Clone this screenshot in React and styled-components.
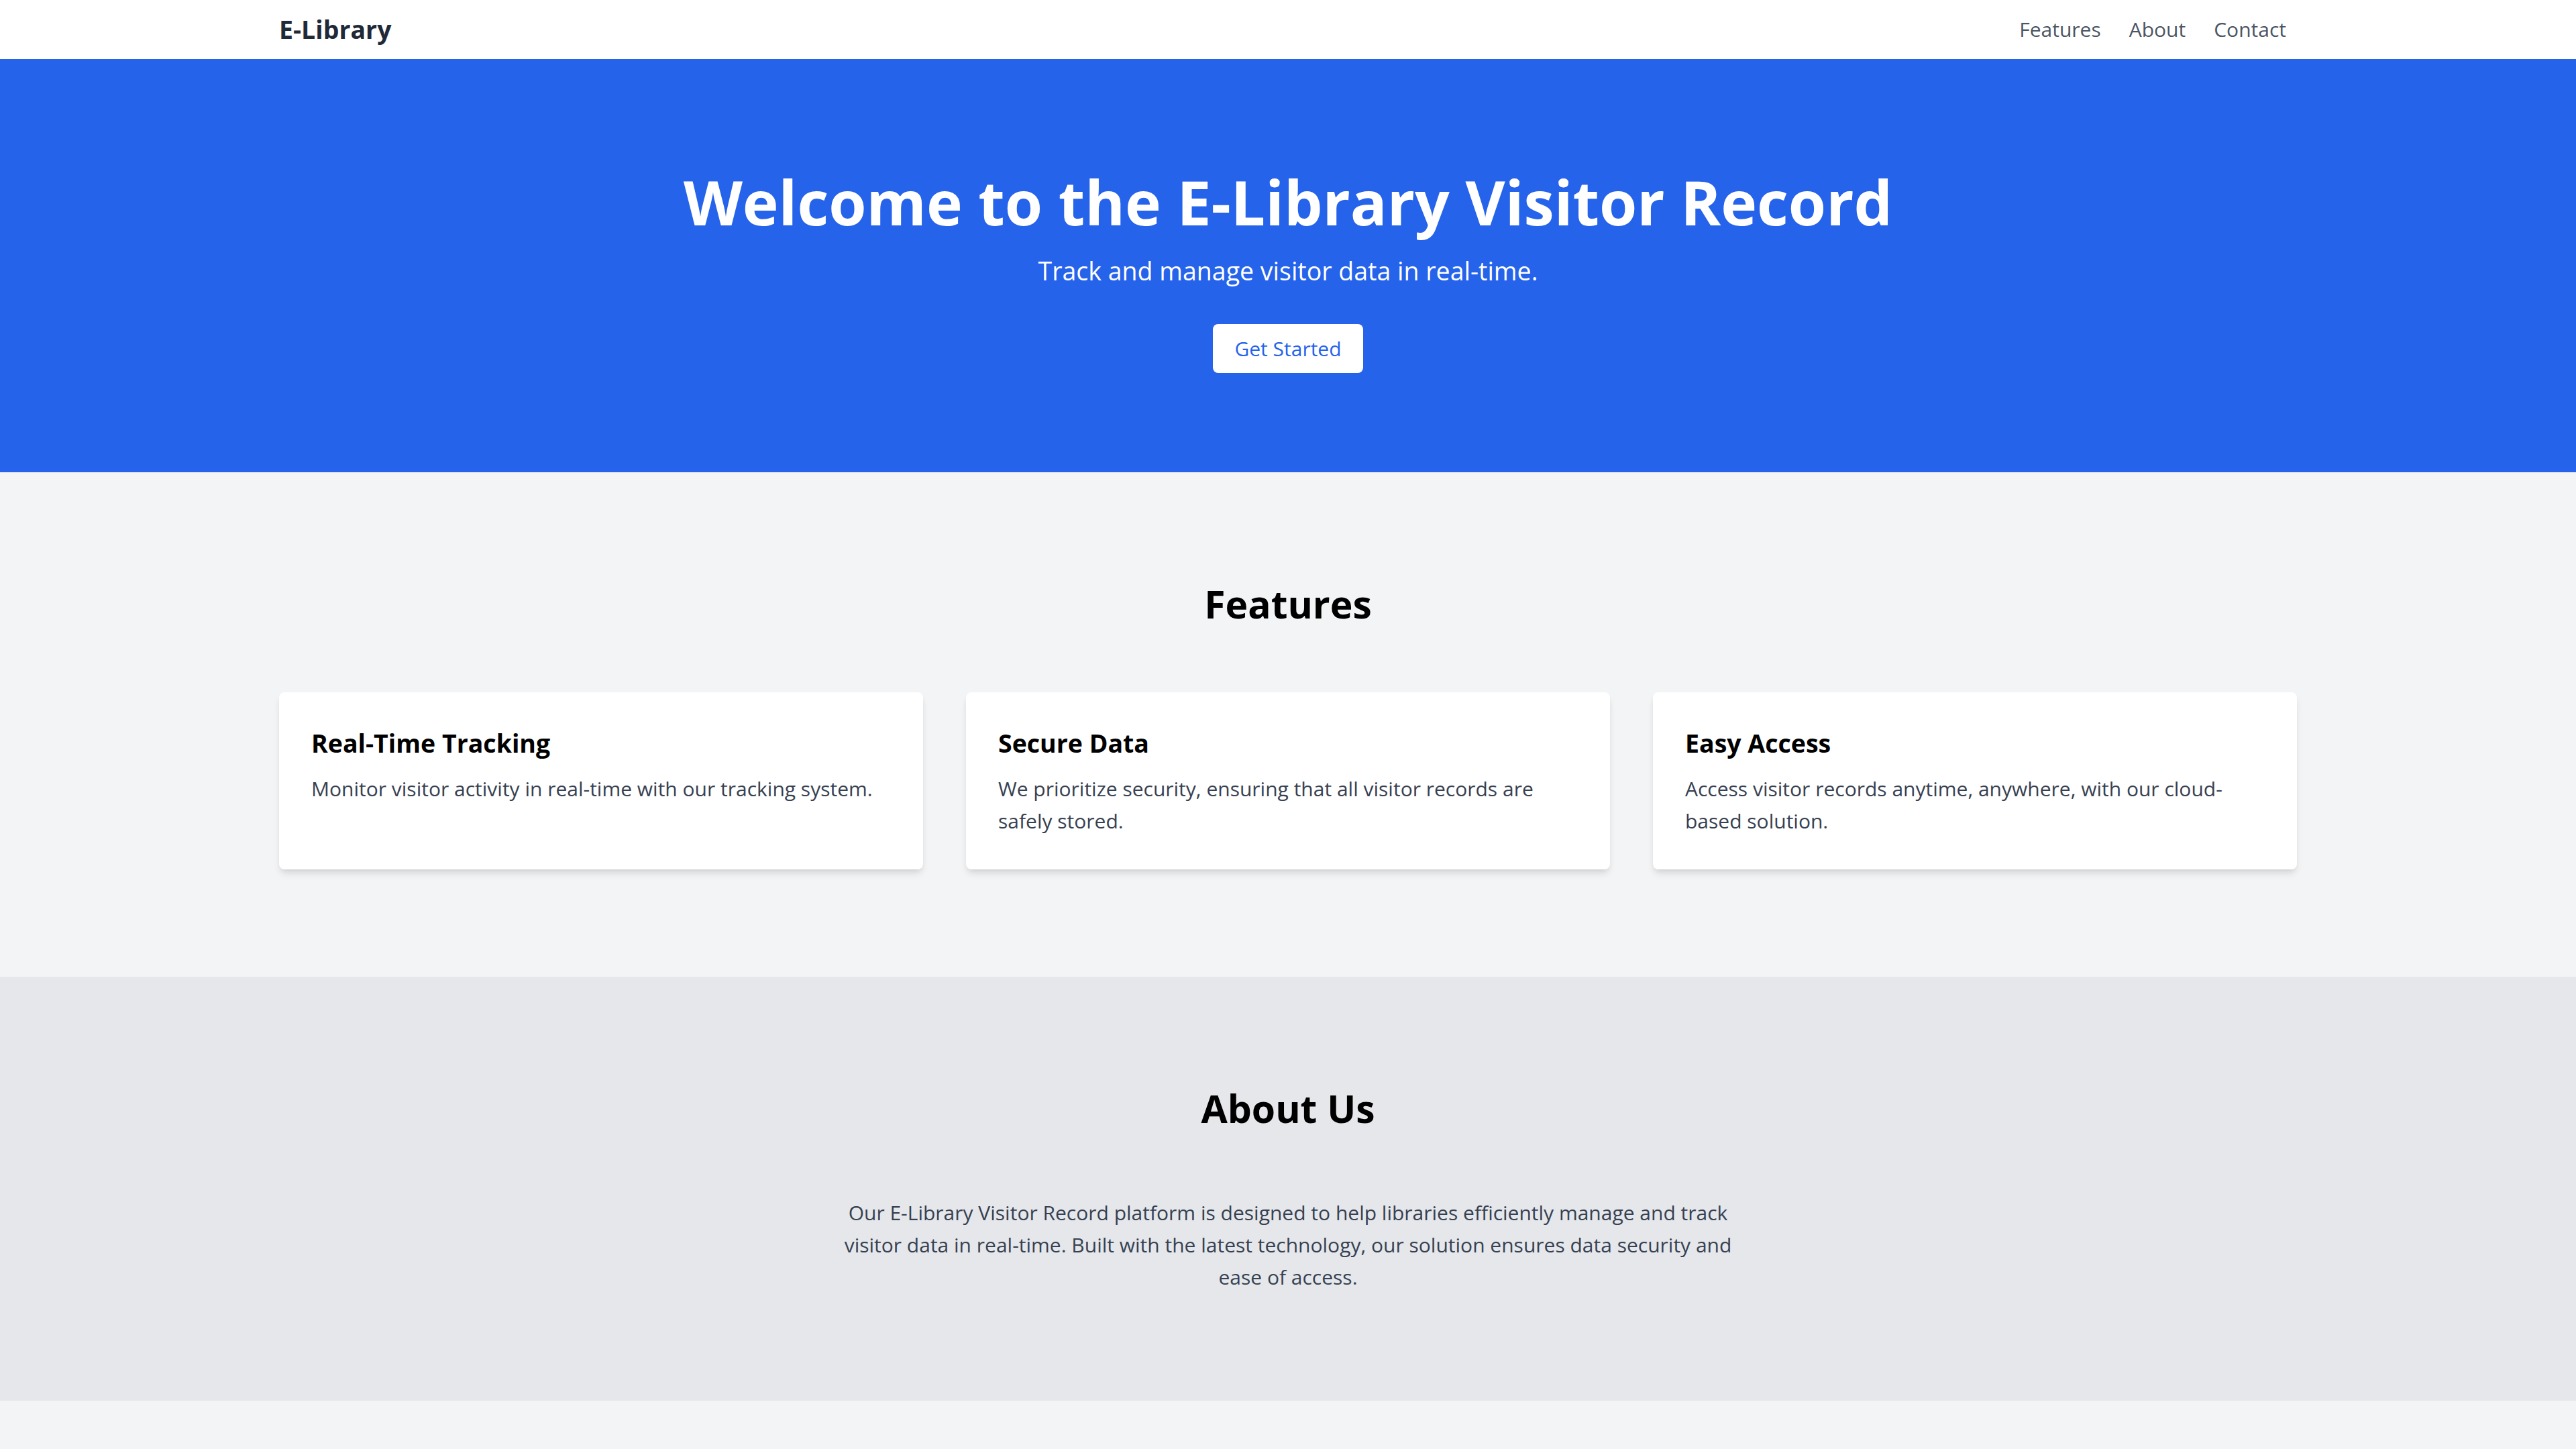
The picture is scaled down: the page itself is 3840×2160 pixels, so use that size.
import React from 'react'
import styled, { createGlobalStyle } from 'styled-components'

const colors = {
  blue: '#2563eb',
  gray100: '#f3f4f6',
  gray200: '#e5e7eb',
  gray600: '#4b5563',
  gray700: '#374151',
  gray800: '#1f2937',
  white: '#ffffff',
}

const fontStack = `"Open Sans", "Noto Sans", "Liberation Sans", sans-serif`

const GlobalStyle = createGlobalStyle`
  html, body {
    margin: 0;
    padding: 0;
    background: ${colors.gray100};
    font-family: ${fontStack};
    font-size: 30px;
    line-height: 48px;
    -webkit-font-smoothing: antialiased;
  }

  * {
    box-sizing: border-box;
  }
`

const SContainer = styled.div`
  max-width: 3072px;
  margin: 0 auto;
  padding: 0 32px;
`

const SNav = styled.nav`
  background: ${colors.white};
  padding: 16px 0;
`

const SNavInner = styled(SContainer)`
  display: flex;
  justify-content: space-between;
  align-items: center;
`

const SLogo = styled.div`
  font-size: 37.5px;
  line-height: 56px;
  font-weight: 700;
  color: ${colors.gray800};
`

const SNavLinks = styled.div`
  display: flex;
  gap: 42px;
  padding-right: 16px;
`

const SNavLink = styled.a`
  color: ${colors.gray600};
  text-decoration: none;
  font-size: 30px;
  line-height: 48px;
`

const SHero = styled.header`
  background: ${colors.blue};
  color: ${colors.white};
  padding: 160px 0;
  text-align: center;
`

const SHeroTitle = styled.h1`
  margin: 0 0 27px;
  padding-top: 5px;
  font-size: 91px;
  line-height: 96px;
  font-weight: 700;
`

const SHeroText = styled.p`
  margin: 0 0 64px;
  font-size: 37.5px;
  line-height: 56px;
`

const SButton = styled.a`
  display: inline;
  background: ${colors.white};
  color: ${colors.blue};
  padding: 16px 32px;
  border-radius: 8px;
  text-decoration: none;
  font-size: 30px;
`

const SSection = styled.section`
  background: ${({ bg }) => bg};
  padding: 160px 0;
`

const SSectionTitle = styled.h2`
  margin: 0 0 96px;
  text-align: center;
  font-size: 57px;
  line-height: 72px;
  font-weight: 700;
  color: #000;
`

const SCardGrid = styled.div`
  display: grid;
  grid-template-columns: repeat(3, 1fr);
  gap: 64px;
`

const SCard = styled.div`
  background: ${colors.white};
  padding: 48px;
  border-radius: 8px;
  box-shadow: 0 8px 12px -2px rgba(0, 0, 0, 0.1),
    0 4px 8px -4px rgba(0, 0, 0, 0.1);
`

const SCardTitle = styled.h3`
  margin: 0 0 16px;
  font-size: 37.5px;
  line-height: 56px;
  font-weight: 700;
  color: #000;
`

const SCardText = styled.p`
  margin: 0;
  color: ${colors.gray700};
`

const SAboutText = styled.p`
  max-width: 1344px;
  margin: 0 auto;
  text-align: center;
  color: ${colors.gray700};
`

const features = [
  {
    title: 'Real-Time Tracking',
    text: 'Monitor visitor activity in real-time with our tracking system.',
  },
  {
    title: 'Secure Data',
    text: 'We prioritize security, ensuring that all visitor records are safely stored.',
  },
  {
    title: 'Easy Access',
    text: 'Access visitor records anytime, anywhere, with our cloud-based solution.',
  },
]

export default function App() {
  return (
    <>
      <GlobalStyle />
      <SNav>
        <SNavInner>
          <SLogo>E-Library</SLogo>
          <SNavLinks>
            <SNavLink href="#features">Features</SNavLink>
            <SNavLink href="#about">About</SNavLink>
            <SNavLink href="#contact">Contact</SNavLink>
          </SNavLinks>
        </SNavInner>
      </SNav>

      <SHero>
        <SContainer>
          <SHeroTitle>Welcome to the E-Library Visitor Record</SHeroTitle>
          <SHeroText>Track and manage visitor data in real-time.</SHeroText>
          <div>
            <SButton href="#features">Get Started</SButton>
          </div>
        </SContainer>
      </SHero>

      <SSection id="features" bg={colors.gray100}>
        <SContainer>
          <SSectionTitle>Features</SSectionTitle>
          <SCardGrid>
            {features.map((f) => (
              <SCard key={f.title}>
                <SCardTitle>{f.title}</SCardTitle>
                <SCardText>{f.text}</SCardText>
              </SCard>
            ))}
          </SCardGrid>
        </SContainer>
      </SSection>

      <SSection id="about" bg={colors.gray200}>
        <SContainer>
          <SSectionTitle>About Us</SSectionTitle>
          <SAboutText>
            Our E-Library Visitor Record platform is designed to help libraries
            efficiently manage and track visitor data in real-time. Built with
            the latest technology, our solution ensures data security and ease
            of access.
          </SAboutText>
        </SContainer>
      </SSection>
    </>
  )
}
